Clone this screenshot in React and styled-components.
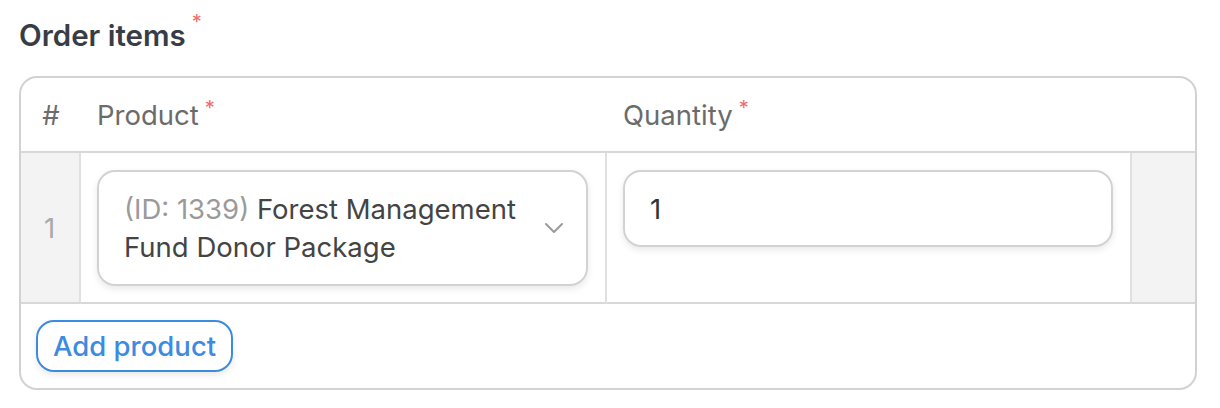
import React from "react";
import styled, { createGlobalStyle } from "styled-components";

const Global = createGlobalStyle`
  html, body { margin: 0; padding: 0; background: #fff; }
  body { font-family: Inter, "Liberation Sans", sans-serif; }
`;

const Page = styled.div`
  padding: 16px 23px 0 19px;
`;

const Title = styled.div`
  font-size: 29.5px;
  font-weight: 600;
  color: #383d45;
  line-height: 38px;
  margin-bottom: 22px;
  display: flex;
  align-items: flex-start;
`;

const Req = styled.span`
  color: #f26b6b;
  font-size: 20px;
  line-height: 1;
  margin-left: ${(p) => p.$gap || 6}px;
  margin-top: ${(p) => p.$top || -4}px;
  font-weight: 400;
`;

const Table = styled.div`
  border: 2px solid #d2d2d2;
  border-radius: 18px;
  overflow: hidden;
`;

const Grid = styled.div`
  display: grid;
  grid-template-columns: 60px 526px 525px 1fr;
`;

const HeadCell = styled.div`
  height: 73px;
  display: flex;
  align-items: center;
  justify-content: ${(p) => (p.$center ? "center" : "flex-start")};
  padding-left: ${(p) => (p.$center ? 0 : 16)}px;
  font-size: 27.5px;
  color: #6b6b6b;
  border-bottom: 2px solid #d8d8d8;
`;

const Cell = styled.div`
  background: ${(p) => (p.$muted ? "#f3f3f3" : "#fff")};
  border-right: ${(p) => (p.$last ? "none" : "2px solid #e0e0e0")};
  border-bottom: 2px solid #d8d8d8;
  padding: 17px 17px 16px 16px;
  display: flex;
  align-items: ${(p) => (p.$center ? "center" : "flex-start")};
  justify-content: ${(p) => (p.$center ? "center" : "flex-start")};
  font-size: 27.5px;
  color: #aaaaaa;
`;

const SelectBox = styled.div`
  flex: 1;
  border: 2px solid #d2d2d2;
  border-radius: 18px;
  box-shadow: 0 3px 7px rgba(0, 0, 0, 0.09);
  padding: 18px 22px 18px 25px;
  display: flex;
  align-items: center;
  gap: 10px;
`;

const SelectText = styled.div`
  flex: 1;
  font-size: 27.5px;
  line-height: 38px;
  color: #444;
`;

const Muted = styled.span`
  color: #9a9a9a;
`;

const Input = styled.div`
  flex: 1;
  height: 73px;
  border: 2px solid #d2d2d2;
  border-radius: 18px;
  box-shadow: 0 3px 7px rgba(0, 0, 0, 0.09);
  padding-left: 25px;
  display: flex;
  align-items: center;
  font-size: 27.5px;
  color: #333;
`;

const Footer = styled.div`
  padding: 16px 16px 16px 15px;
`;

const AddButton = styled.button`
  font-family: inherit;
  background: #fff;
  border: 2px solid #3d8be0;
  border-radius: 18px;
  color: #3d8be0;
  font-size: 27.5px;
  font-weight: 500;
  height: 52px;
  padding: 0 15px;
  box-shadow: 0 3px 7px rgba(0, 0, 0, 0.09);
  cursor: pointer;
`;

const Chevron = () => (
  <svg width="20" height="12" viewBox="0 0 20 12" fill="none">
    <path d="M2 2l8 8 8-8" stroke="#9a9a9a" strokeWidth="2" strokeLinecap="round" strokeLinejoin="round" />
  </svg>
);

export default function App() {
  return (
    <>
      <Global />
      <Page>
        <Title>
          Order items<Req $top={-4} $gap={6}>*</Req>
        </Title>
        <Table>
          <Grid>
            <HeadCell $center>#</HeadCell>
            <HeadCell>
              Product<Req $top={-14}>*</Req>
            </HeadCell>
            <HeadCell>
              Quantity<Req $top={-14}>*</Req>
            </HeadCell>
            <HeadCell />
            <Cell $muted $center>1</Cell>
            <Cell>
              <SelectBox>
                <SelectText>
                  <Muted>(ID: 1339)</Muted> Forest Management Fund Donor Package
                </SelectText>
                <Chevron />
              </SelectBox>
            </Cell>
            <Cell>
              <Input>1</Input>
            </Cell>
            <Cell $muted $last />
          </Grid>
          <Footer>
            <AddButton>Add product</AddButton>
          </Footer>
        </Table>
      </Page>
    </>
  );
}
